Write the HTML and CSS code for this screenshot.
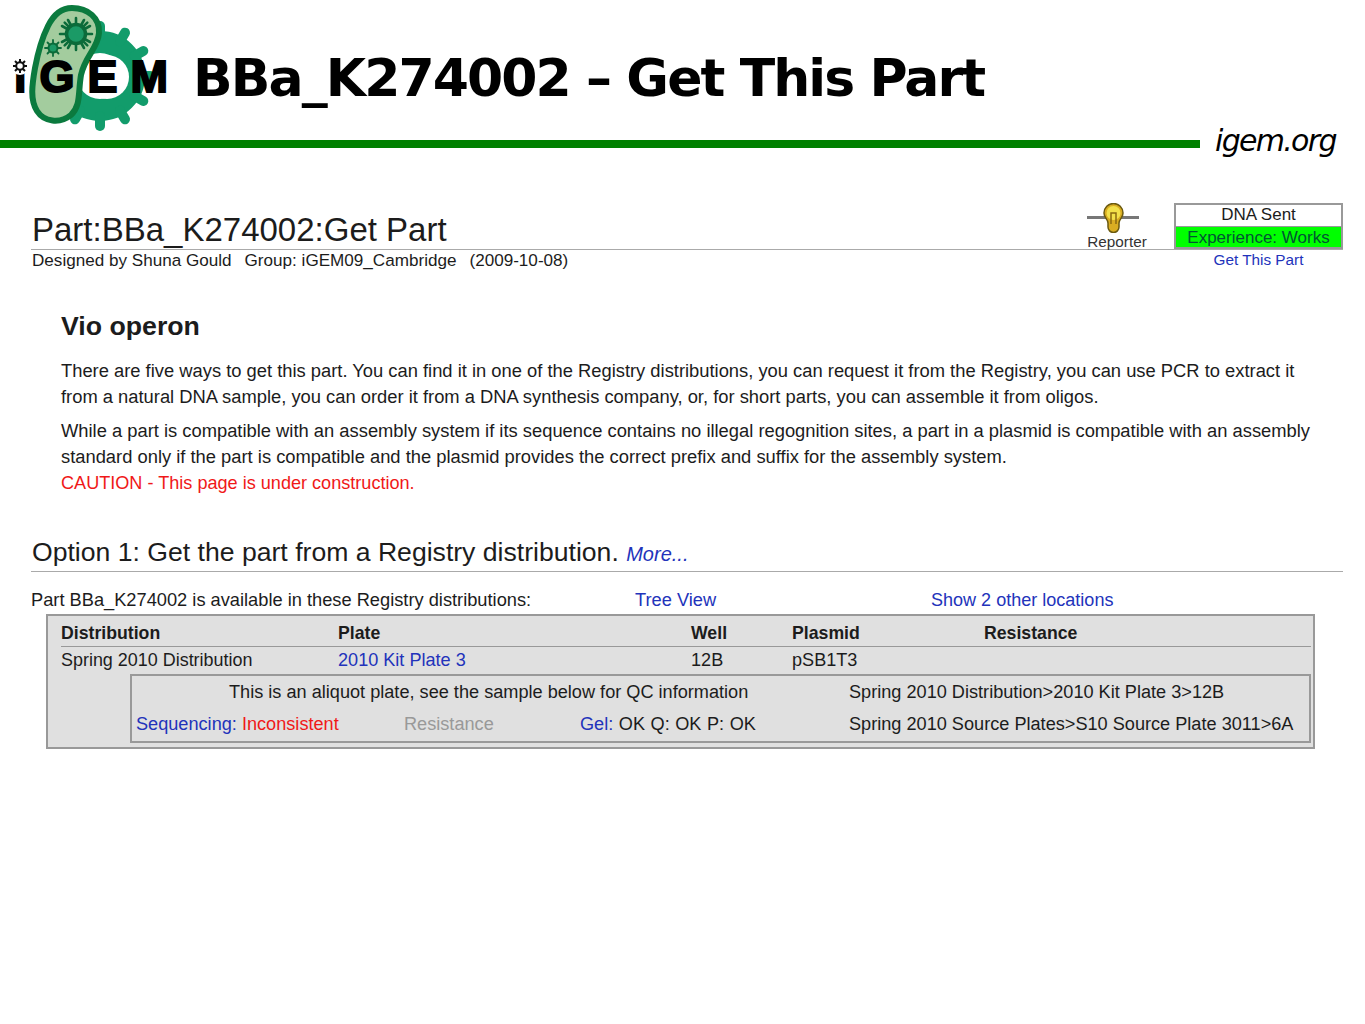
FILE: index.html
```html
<!DOCTYPE html>
<html lang="en">
<head>
<meta charset="utf-8">
<title>BBa_K274002 – Get This Part</title>
<link rel="stylesheet" href="styles.css">
</head>
<body>
<header class="slide-head">
  <div class="logo">
    <svg class="logo-art" width="180" height="140" viewBox="0 0 180 140">
      <circle cx="100" cy="76" r="34" fill="none" stroke="#129c6b" stroke-width="22"/>
      <circle cx="107" cy="77" r="22" fill="#fff"/>
      <g stroke="#129c6b" stroke-width="10" stroke-linecap="round">
        <line x1="140" y1="76" x2="150" y2="76"/>
        <line x1="140" y1="76" x2="150" y2="76" transform="rotate(30 100 76)"/>
        <line x1="140" y1="76" x2="150" y2="76" transform="rotate(60 100 76)"/>
        <line x1="140" y1="76" x2="150" y2="76" transform="rotate(90 100 76)"/>
        <line x1="140" y1="76" x2="150" y2="76" transform="rotate(120 100 76)"/>
        <line x1="140" y1="76" x2="150" y2="76" transform="rotate(-30 100 76)"/>
        <line x1="140" y1="76" x2="150" y2="76" transform="rotate(-60 100 76)"/>
        <line x1="140" y1="76" x2="150" y2="76" transform="rotate(-90 100 76)"/>
      </g>
      <path d="M72 8C88 8 100 18 99 33C98 48 85 56 81 75C78 92 81 106 71 115C60 124 44 122 37 111C30 100 32 85 35 68C38 52 42 38 48 26C54 14 62 8 72 8Z" fill="#a3cc9e" stroke="#0b7a3e" stroke-width="6"/>
      <g stroke="#0b6b3a" stroke-width="2.6" stroke-linecap="round">
        <circle cx="76" cy="34" r="9.5" fill="#1b9a66" stroke-width="3.5"/>
        <path d="M76 18v5M76 45v5M60 34h5M87 34h5M64.700 22.700l3.500 3.500M83.800 41.800l3.500 3.500M64.700 45.300l3.500-3.500M83.800 26.200l3.500-3.500M68 20l2.500 4.500M84 20l-2.500 4.500M62 26l4.500 2.500M90 26l-4.500 2.500M68 48l2.500-4.500M84 48l-2.500-4.500M62 42l4.500-2.500M90 42l-4.500-2.500"/>
        <circle cx="53" cy="48" r="4.500" fill="#1b9a66" stroke-width="2"/>
        <path d="M53 40v3M53 53v3M45 48h3M58 48h3M47.500 42.500l2 2M56.500 51.500l2 2M47.500 53.500l2-2M56.500 44.500l2-2" stroke-width="1.800"/>
      </g>
    </svg>
    <span class="logo-word">iGEM</span>
    <svg class="logo-dot" width="18" height="18" viewBox="0 0 18 18">
      <circle cx="9" cy="9" r="9" fill="#fff"/>
      <circle cx="9" cy="9" r="3.800" fill="#fff" stroke="#111" stroke-width="2"/>
      <path d="M9 2v3M9 13v3M2 9h3M13 9h3M4 4l2 2M12 12l2 2M4 14l2-2M12 6l2-2" stroke="#111" stroke-width="2"/>
    </svg>
  </div>
  <h1 class="slide-title">BBa_K274002 – Get This Part</h1>
</header>
<div class="rule-row">
  <div class="rule"></div>
  <div class="site">igem.org</div>
</div>

<main class="page">
  <section class="part-head">
    <div class="part-title-row">
      <h2 class="part-title">Part:BBa_K274002:Get Part</h2>
      <div class="badges">
        <div class="reporter">
          <svg class="bulb" width="54" height="30" viewBox="0 0 54 30">
            <rect x="0" y="13" width="52" height="3" fill="#777"/>
            <path d="M17 10a9.500 9.500 0 0 1 19 0c0 5-4 6-4 10v4a5.500 5.500 0 0 1-11 0v-4c0-4-4-5-4-10Z" fill="#d9ad22" stroke="#6b5a10" stroke-width="1.500"/>
            <circle cx="26.500" cy="10" r="7" fill="#f2e04a"/>
            <path d="M24 21V10h5v11" fill="none" stroke="#8a6a10" stroke-width="1.500"/>
          </svg>
          <span>Reporter</span>
        </div>
        <div class="status">
          <div class="status-box">
            <div class="status-sent">DNA Sent</div>
            <div class="status-exp">Experience: Works</div>
          </div>
          <a class="link status-link">Get This Part</a>
        </div>
      </div>
    </div>
    <div class="byline">
      <span>Designed by Shuna Gould</span><span>Group: iGEM09_Cambridge</span><span>(2009-10-08)</span>
    </div>
  </section>

  <section class="intro">
    <h3 class="intro-title">Vio operon</h3>
    <p class="para">There are five ways to get this part. You can find it in one of the Registry distributions, you can request it from the Registry, you can use PCR to extract it from a natural DNA sample, you can order it from a DNA synthesis company, or, for short parts, you can assemble it from oligos.</p>
    <p class="para para-second">While a part is compatible with an assembly system if its sequence contains no illegal regognition sites, a part in a plasmid is compatible with an assembly standard only if the part is compatible and the plasmid provides the correct prefix and suffix for the assembly system.</p>
    <p class="caution">CAUTION - This page is under construction.</p>
  </section>

  <section class="option">
    <h2 class="option-title">Option 1: Get the part from a Registry distribution. <a class="link more">More...</a></h2>
    <div class="avail">
      <span class="avail-text">Part BBa_K274002 is available in these Registry distributions:</span>
      <a class="link tree">Tree View</a>
      <a class="link show">Show 2 other locations</a>
    </div>
    <div class="dist">
      <div class="dist-grid dist-head">
        <span>Distribution</span><span>Plate</span><span>Well</span><span>Plasmid</span><span>Resistance</span>
      </div>
      <div class="dist-grid dist-row">
        <span class="dist-name">Spring 2010 Distribution</span><a class="link">2010 Kit Plate 3</a><span>12B</span><span>pSB1T3</span><span></span>
      </div>
      <div class="detail">
        <div class="detail-line">
          <span class="aliquot">This is an aliquot plate, see the sample below for QC information</span>
          <span class="path">Spring 2010 Distribution&gt;2010 Kit Plate 3&gt;12B</span>
        </div>
        <div class="detail-line">
          <span class="seq"><a class="link">Sequencing:</a> <span class="red">Inconsistent</span></span>
          <span class="res">Resistance</span>
          <span class="gel"><a class="link">Gel:</a> OK Q: OK P: OK</span>
          <span class="path">Spring 2010 Source Plates&gt;S10 Source Plate 3011&gt;6A</span>
        </div>
      </div>
    </div>
  </section>
</main>
</body>
</html>
```
FILE: styles.css
```css
* { box-sizing: border-box; }
html, body { margin: 0; padding: 0; background: #fff; }
body { width: 1365px; height: 1024px; overflow: hidden; font-family: "Liberation Sans", Arial, sans-serif; color: #1c1c1c; font-size: 18px; }
h1, h2, h3, p { margin: 0; font-weight: normal; }

.slide-head { height: 140px; display: flex; align-items: flex-start; }
.logo { position: relative; width: 193px; height: 140px; flex: none; }
.logo-art { display: block; }
.logo-word { position: absolute; left: 14px; top: 51px; font-size: 45px; line-height: 52px; font-weight: bold; color: #000; -webkit-text-stroke: 2px #000; letter-spacing: 13px; font-family: "Liberation Sans", sans-serif; white-space: nowrap; }
.logo-dot { position: absolute; left: 11px; top: 57px; display: block; }
.slide-title { font-family: "DejaVu Sans", sans-serif; font-weight: 700; font-size: 52px; line-height: 70px; margin-top: 43px; color: #000; white-space: nowrap; letter-spacing: -1.9px; }

.rule-row { display: flex; height: 60px; }
.rule { width: 1200px; height: 8px; background: #008000; }
.site { margin-left: 15px; margin-top: -21px; font-family: "DejaVu Sans", sans-serif; font-style: italic; font-size: 30px; line-height: 44px; color: #000; letter-spacing: -1.7px; white-space: nowrap; }

.page { padding: 0 22px 0 31px; }
.part-head { position: relative; }
.part-title-row { display: flex; justify-content: space-between; align-items: flex-end; height: 50px; border-bottom: 1px solid #aaa; }
.part-title { font-size: 33px; line-height: 42px; margin-bottom: -2px; padding-left: 1px; }
.badges { display: flex; align-items: flex-start; gap: 26px; height: 74px; margin-bottom: -28px; }
.reporter { width: 62px; display: flex; flex-direction: column; align-items: center; font-size: 15.3px; color: #333; }
.reporter span { line-height: 17px; }
.bulb { display: block; margin-right: 6px; }
.status { width: 169px; text-align: center; }
.status-box { border: 2px solid #999; }
.status-sent { background: #fff; height: 22px; font-size: 17px; line-height: 20px; border-bottom: 1px solid #999; }
.status-exp { background: #0f0; height: 20px; font-size: 17px; line-height: 22px; color: #053; }
.status-link { display: block; font-size: 15.3px; line-height: 22px; }
.link { color: #2233bb; }
.byline { display: flex; gap: 13px; font-size: 17.1px; line-height: 22px; padding-left: 1px; }

.intro { padding: 0 28px 0 30px; margin-top: 38px; }
.intro-title { font-size: 26.7px; line-height: 32px; font-weight: bold; margin-bottom: 16px; }
.para { font-size: 18.35px; line-height: 26px; }
.para-second { margin-top: 8px; }
.caution { font-size: 18.1px; line-height: 27px; color: #f01818; }

.option { margin-top: 38px; }
.option-title { font-size: 26.6px; line-height: 34px; border-bottom: 1px solid #aaa; padding-left: 1px; }
.more { font-size: 20px; font-style: italic; }
.avail { display: flex; font-size: 18.25px; line-height: 24px; margin-top: 16px; }
.avail-text { width: 604px; }
.tree { width: 296px; }
.show { font-size: 18.05px; }
.dist { margin: 2px 28px 0 15px; background: #e0e0e0; border: 2px solid #999; height: 135px; padding: 5px 2px 0 13px; }
.dist-grid { display: grid; grid-template-columns: 277px 353px 101px 192px 1fr; line-height: 24px; font-size: 18.1px; }
.dist-head { font-weight: bold; font-size: 17.7px; border-bottom: 1px solid #999; height: 26px; }
.dist-row { height: 27px; line-height: 26px; }
.dist-name { font-size: 17.95px; }
.detail { margin: 0 0 0 69px; height: 69px; border: 2px solid #999; padding: 0 4px; }
.detail-line { display: flex; height: 32px; line-height: 32px; font-size: 18.15px; white-space: nowrap; }
.aliquot { width: 713px; padding-left: 93px; }
.seq { width: 268px; }
.res { width: 176px; color: #999; }
.gel { width: 269px; word-spacing: 0.5px; }
.red { color: #f01818; }
```
